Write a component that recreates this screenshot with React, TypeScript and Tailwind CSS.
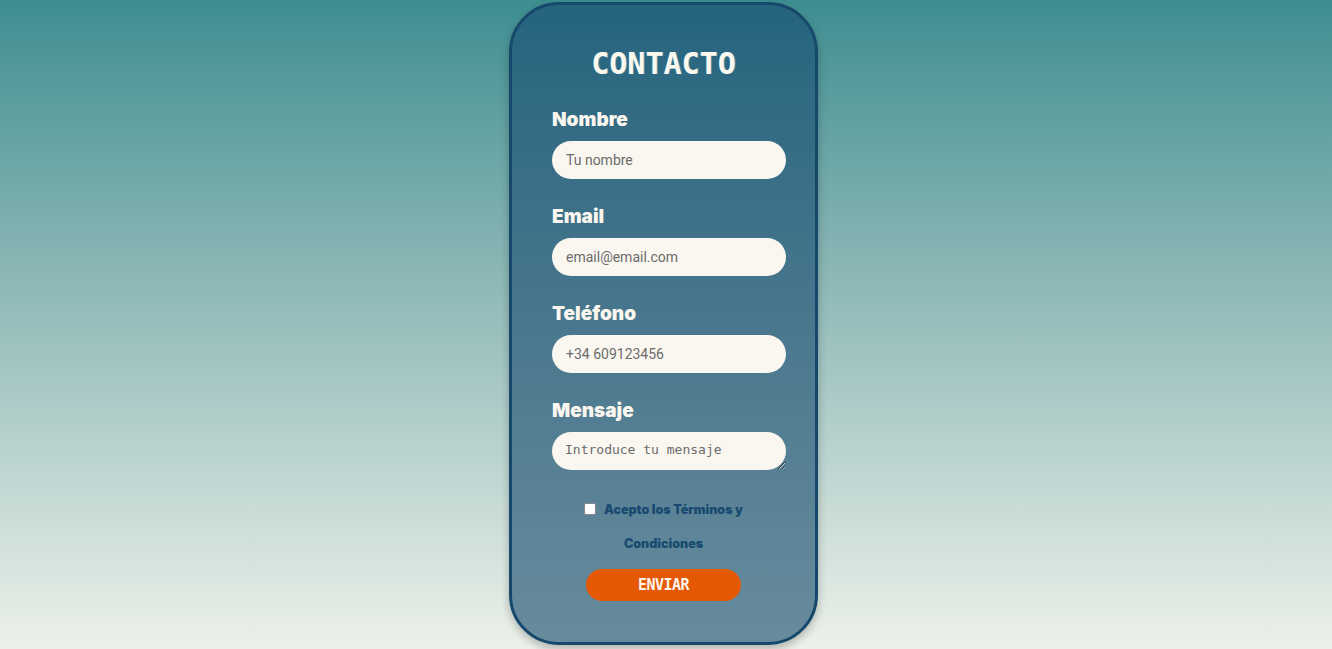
import { useState } from "react"

const fields = [
  { label: "Nombre", placeholder: "Tu nombre", type: "text" },
  { label: "Email", placeholder: "email@email.com", type: "email" },
  { label: "Teléfono", placeholder: "+34 609123456", type: "tel" },
]

export default function App() {
  const [accepted, setAccepted] = useState(false)

  return (
    <div className="min-h-[649px] w-full bg-gradient-to-b from-[#3d8e91] to-[#edf1ea] flex justify-center pt-[2px] pr-[5px]">
      <form
        className="w-[309px] h-[643px] rounded-[50px] border-[3px] border-[#16486c] bg-gradient-to-b from-[#25647e] to-[#688b9d] shadow-[0_4px_8px_rgba(0,0,0,0.25)] flex flex-col pt-[39px]"
        onSubmit={(e) => e.preventDefault()}
      >
        <h1 className="text-center text-[30px] leading-[40px] font-bold text-[#fdf8ee] font-['DejaVu_Sans_Mono',monospace] [text-shadow:1px_0_0_rgba(120,200,230,0.5)]">
          CONTACTO
        </h1>

        <div className="pl-[40px] mt-[22px] flex flex-col">
          {fields.map((f) => (
            <div key={f.label} className="flex flex-col mb-[24px]">
              <label className="h-[28px] leading-[28px] text-[19px] font-black text-[#fbf7f0] font-['Inter',sans-serif]">
                {f.label}
              </label>
              <input
                type={f.type}
                placeholder={f.placeholder}
                className="mt-[7px] w-[234px] h-[38px] rounded-full bg-[#faf7f1] px-[14px] text-[14px] text-[#333] placeholder:text-[#6b6b6b] font-['Roboto',sans-serif] outline-none"
              />
            </div>
          ))}
          <div className="flex flex-col">
            <label className="h-[28px] leading-[28px] text-[19px] font-black text-[#fbf7f0] font-['Inter',sans-serif]">
              Mensaje
            </label>
            <textarea
              placeholder="Introduce tu mensaje"
              className="mt-[7px] w-[234px] h-[38px] rounded-[19px] bg-[#faf7f1] px-[13px] pt-[10px] text-[13px] leading-[16px] text-[#333] placeholder:text-[#6b6b6b] font-['DejaVu_Sans_Mono',monospace] outline-none"
            />
          </div>
        </div>

        <div className="mt-[23px] text-center text-[12.5px] leading-[34px] font-black text-[#184a70] font-['Inter',sans-serif]">
          <input
            type="checkbox"
            checked={accepted}
            onChange={(e) => setAccepted(e.target.checked)}
            className="w-[12px] h-[12px] mr-[8px] align-[-1px] appearance-none bg-white border border-[#888] rounded-[2px] checked:bg-[#184a70]"
          />
          Acepto los Términos y
          <br />
          Condiciones
        </div>

        <button
          type="submit"
          className="mt-[8px] self-center w-[155px] h-[32px] rounded-full bg-[#e55806] text-[#fdf5ea] text-[15px] font-bold font-['DejaVu_Sans_Mono',monospace] tracking-[-0.5px]"
        >
          ENVIAR
        </button>
      </form>
    </div>
  )
}
